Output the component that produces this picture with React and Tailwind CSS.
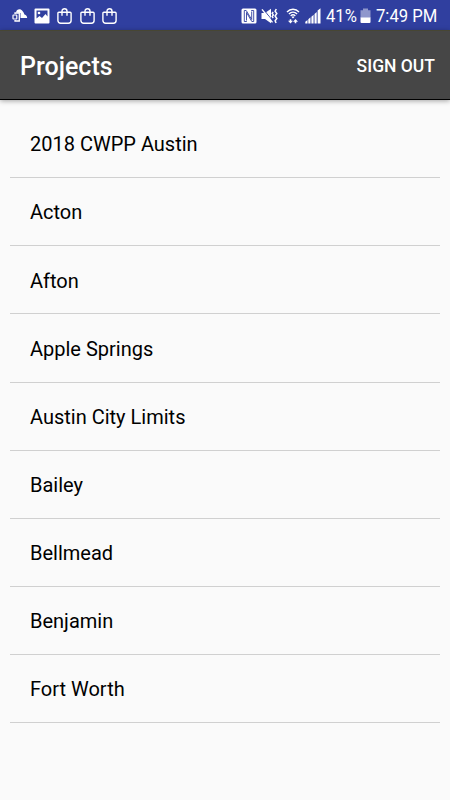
const projects = [
  '2018 CWPP Austin',
  'Acton',
  'Afton',
  'Apple Springs',
  'Austin City Limits',
  'Bailey',
  'Bellmead',
  'Benjamin',
  'Fort Worth',
];

function CloudIcon() {
  return (
    <svg className="w-4 h-4" viewBox="0 0 16 16">
      <path d="M4 4.500C4.500 1 8.500.3 10.500 3c1.200 1.500 1.500 2.300 2 3.500 1.700.5 2.600 1.700 2.700 3.500H8.500V5z" fill="#fff" />
      <path d="M3 6V5h4.300v8H3v-1" fill="none" stroke="#fff" strokeWidth="1.300" />
      <rect x="1" y="7" width="3.800" height="4" rx=".5" fill="none" stroke="#fff" strokeWidth="1.200" />
    </svg>
  );
}

function PictureIcon() {
  return (
    <svg className="w-4 h-4" viewBox="0 0 16 16">
      <path fillRule="evenodd" d="M1.500.5h13a1 1 0 0 1 1 1v13a1 1 0 0 1-1 1h-13a1 1 0 0 1-1-1v-13a1 1 0 0 1 1-1zM2.500 2.500v8l3-2.500 2.500 2 3.500-4 2 2.500v-6z" fill="#fff" />
      <circle cx="5" cy="5" r="1.300" fill="#fff" />
    </svg>
  );
}

function BagIcon() {
  return (
    <svg className="w-[15px] h-4" viewBox="0 0 15 16" fill="none" stroke="#fff" strokeWidth="1.400">
      <path d="M1.900 4.200h11.200a1 1 0 0 1 1 1v7.300a2.700 2.700 0 0 1-2.700 2.700H3.600a2.700 2.700 0 0 1-2.700-2.700V5.200a1 1 0 0 1 1-1z" />
      <path d="M5 7.700V3.200C5 0 10 0 10 3.200v4.500" />
    </svg>
  );
}

function NfcIcon() {
  return (
    <svg className="w-4 h-4" viewBox="0 0 16 16">
      <rect x=".5" y=".5" width="15" height="15" rx="1.500" fill="#fff" />
      <path d="M5.800 13.500H3.300V2.500h1.900l5.500 9V3.500" fill="none" stroke="#303f9f" strokeWidth=".9" />
      <path d="M10.200 2.500h2.500v11h-1.900l-5.300-9v8" fill="none" stroke="#303f9f" strokeWidth=".9" />
    </svg>
  );
}

function MuteIcon() {
  return (
    <svg className="w-[17px] h-4" viewBox="0 0 17 16">
      <path d="M.5 5h3.500L10 .8v14.400L4 11H.5z" fill="#fff" />
      <path d="M2 .8l10 12.500" stroke="#303f9f" strokeWidth="1" />
      <path d="M1 1.400l10.500 13" stroke="#fff" strokeWidth="1.500" />
      <path d="M12.200 4l-1 1.300 1.100 1.600-1.100 1.700 1 1.400M15.300 1l-1.200 2.200 1.700 2.300-1.700 2.500 1.700 2.500-1.700 2.300 1 2.200" fill="none" stroke="#fff" strokeWidth="1.500" />
    </svg>
  );
}

function WifiIcon() {
  return (
    <svg className="w-[14px] h-4" viewBox="0 0 14 16" fill="none" stroke="#fff" strokeWidth="1.400">
      <path d="M1 4C4.300.3 9.700.3 13 4M2.900 6c2.400-2.500 5.800-2.500 8.200 0M4.700 7.900c1.400-1.300 3.200-1.300 4.600 0" />
      <path d="M7 8l1.300 1.300L7 10.600 5.700 9.300zM4.500 15.500L2 12.800h1.700v-1.600h1.600v1.600H7zM9.500 11l2.500 2.700h-1.700v1.600H8.700v-1.600H7z" fill="#fff" stroke="none" />
    </svg>
  );
}

function SignalIcon() {
  return (
    <svg className="w-4 h-4" viewBox="0 0 16 16" fill="#fff">
      <path d="M.3 15.500v-1.700L2.500 12v3.500zM3.300 15.500v-4.200l2.200-2v6.200zM6.400 15.500V8.700l2.200-2v8.800zM9.500 15.500V5.900l2.200-2v11.600zM12.600 15.500V2.600L15.500.3v15.200z" />
    </svg>
  );
}

function BatteryIcon() {
  return (
    <svg className="w-[11px] h-4" viewBox="0 0 11 16">
      <path d="M3 .5h5v1.700h2.500V10H.5V2.200H3z" fill="#8f97cc" />
      <path d="M.5 9.500h10V14a1 1 0 0 1-1 1h-8a1 1 0 0 1-1-1z" fill="#fff" />
    </svg>
  );
}

function StatusBar() {
  return (
    <div className="flex h-[30px] items-center justify-between bg-[#303f9f] pl-3 pr-[13px] pt-px text-white">
      <div className="flex items-center gap-[6px]">
        <CloudIcon />
        <PictureIcon />
        <div className="ml-px flex gap-[7.500px]">
          <BagIcon />
          <BagIcon />
          <BagIcon />
        </div>
      </div>
      <div className="flex items-center">
        <NfcIcon />
        <div className="ml-1 flex"><MuteIcon /></div>
        <div className="ml-2 flex"><WifiIcon /></div>
        <div className="ml-[5px] flex"><SignalIcon /></div>
        <span className="ml-[5px] w-[31px] origin-left scale-x-[0.900] whitespace-nowrap text-[18.500px] leading-6">41%</span>
        <div className="ml-[3px] flex"><BatteryIcon /></div>
        <span className="ml-[5px] w-[61px] origin-left scale-x-[0.900] whitespace-nowrap text-[18.500px] leading-6">7:49 PM</span>
      </div>
    </div>
  );
}

export default function App() {
  return (
    <div className="h-screen overflow-hidden bg-[#fafafa] font-[Roboto,sans-serif] text-black">
      <StatusBar />
      <header className="flex h-[70px] items-center justify-between border-t border-b border-t-[#474633] border-b-black bg-[#464646] pl-5 pr-[15px] pt-[3px] text-white shadow-[0_1px_5px_rgba(0,0,0,0.35)]">
        <h1 className="text-[25px] font-medium leading-8">Projects</h1>
        <button className="pb-px text-[17.500px] font-medium leading-6">SIGN OUT</button>
      </header>
      <ul className="px-[10px] pt-[10px]">
        {projects.map(name => (
          <li key={name} className="flex h-[68.125px] items-center border-b border-[#d0d0d0] pl-5 pt-[1.500px] text-[20px]">
            {name}
          </li>
        ))}
      </ul>
    </div>
  );
}
